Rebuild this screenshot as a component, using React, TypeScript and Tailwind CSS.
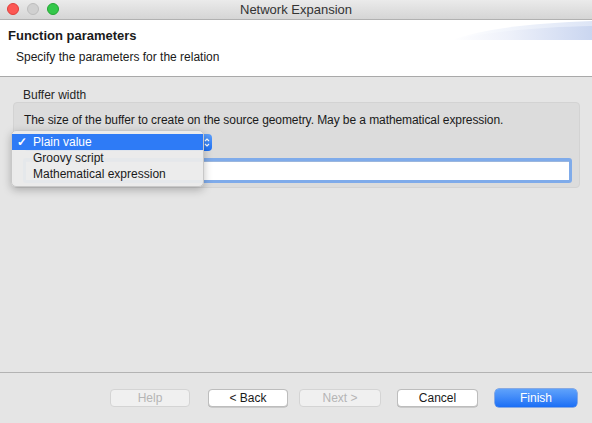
import React from "react";

const font = { fontFamily: '"Liberation Sans", Arial, sans-serif' };

function Btn({ label, kind, w, ml }: { label: string; kind: "disabled" | "normal" | "primary"; w: string; ml: string }) {
  if (kind === "primary")
    return (
      <div className={`${w} ${ml} h-[18px] rounded-[4px] bg-gradient-to-b from-[#5fa2fb] to-[#1a6ef5] text-white text-[12px] flex items-center justify-center shadow-[0_0_0_0.5px_#2a6fe0]`}>
        {label}
      </div>
    );
  if (kind === "disabled")
    return (
      <div className={`${w} ${ml} h-[18px] rounded-[4px] bg-[#f0f0f0] border border-[#d4d4d4] text-[#b5b5b5] text-[12px] flex items-center justify-center`}>
        {label}
      </div>
    );
  return (
    <div className={`${w} ${ml} h-[18px] rounded-[4px] bg-white border border-[#bdbdbd] text-[#1a1a1a] text-[12px] flex items-center justify-center shadow-[0_0.5px_0_#b0b0b0]`}>
      {label}
    </div>
  );
}

export default function App() {
  return (
    <div className="w-[592px] h-[423px] flex flex-col bg-[#e5e5e5] overflow-hidden text-[#1a1a1a]" style={font}>
      {/* title bar */}
      <div className="relative h-[20px] bg-gradient-to-b from-[#ebebeb] to-[#d5d5d5] border-b border-[#b1b1b1] flex items-center justify-center">
        <div className="absolute left-[7px] top-[3px] flex gap-[8px]">
          <div className="w-[12px] h-[12px] rounded-full bg-[#fc5753] border border-[#df3e3a]" />
          <div className="w-[12px] h-[12px] rounded-full bg-[#d0d0d0] border border-[#bdbdbd]" />
          <div className="w-[12px] h-[12px] rounded-full bg-[#34c84a] border border-[#24a634]" />
        </div>
        <span className="text-[13px] text-[#333] leading-none">Network Expansion</span>
      </div>

      {/* header */}
      <div className="relative h-[57px] bg-white border-b border-[#a9a9a9] flex flex-col pl-[8px]">
        <svg className="absolute right-0 top-[1px]" width="140" height="20" viewBox="0 0 140 20">
          <defs>
            <linearGradient id="g" x1="0" x2="1" y1="0" y2="0">
              <stop offset="0" stopColor="#ffffff" />
              <stop offset="0.4" stopColor="#eef1fa" />
              <stop offset="1" stopColor="#cad6f0" />
            </linearGradient>
            <linearGradient id="g2" x1="0" x2="1" y1="0" y2="0">
              <stop offset="0" stopColor="#ffffff" />
              <stop offset="1" stopColor="#dde5f6" />
            </linearGradient>
          </defs>
          <path d="M0 19 C 30 8, 80 2, 140 0 L140 19 Z" fill="url(#g2)" />
          <path d="M0 19 C 35 11, 85 6, 140 5 L140 19 Z" fill="url(#g)" />
        </svg>
        <div className="relative mt-[8px] text-[13px] font-bold leading-[16px]">Function parameters</div>
        <div className="relative mt-[6px] ml-[8px] text-[12px] leading-[14px]">Specify the parameters for the relation</div>
      </div>

      {/* body */}
      <div className="flex-1 relative px-[13px] pt-[11px]">
        <div className="ml-[10px] text-[12px] leading-[14px] text-[#262626]">Buffer width</div>
        <div className="w-[567px] h-[86px] rounded-[4px] bg-[#dcdcdc] border border-[#d3d3d3] px-[10px] pt-[10px]">
          <div className="text-[12px] leading-[14px] tracking-[-0.08px]">
            The size of the buffer to create on the source geometry. May be a mathematical expression.
          </div>
          <div className="mt-[7px] w-[188px] h-[17px] rounded-[4px] bg-gradient-to-b from-[#5c9ffa] to-[#1b6ff5] flex justify-end items-center pr-[2px]">
            <svg width="6" height="11" viewBox="0 0 6 11">
              <path d="M1 4 L3 2 L5 4 M1 7 L3 9 L5 7" stroke="white" strokeWidth="1.2" fill="none" />
            </svg>
          </div>
          <div className="mt-[7px] w-[549px] h-[25px] rounded-[3px] bg-[#7fabea] p-[3px] -ml-[1px]">
            <div className="w-full h-full bg-white border-t border-[#9bb6dd]" />
          </div>
        </div>

        {/* dropdown menu */}
        <div className="absolute left-[11px] top-[53px] w-[193px] h-[57px] rounded-[5px] bg-[#ebebeb]/95 border border-[#c8c8c8] shadow-[0_3px_8px_rgba(0,0,0,0.25)] pt-[3px] text-[12px]">
          <div className="h-[16px] bg-[#2e7bf6] text-white flex items-center">
            <span className="w-[21px] pl-[5px] text-[12px] font-bold leading-none">✓</span>
            <span>Plain value</span>
          </div>
          <div className="h-[16px] flex items-center pl-[21px]">Groovy script</div>
          <div className="h-[16px] flex items-center pl-[21px]">Mathematical expression</div>
        </div>
      </div>

      {/* footer */}
      <div className="h-[51px] border-t border-[#b3b3b3] flex items-start pt-[16px] pl-[110px]">
        <Btn label="Help" kind="disabled" w="w-[80px]" ml="ml-0" />
        <Btn label="< Back" kind="normal" w="w-[80px]" ml="ml-[18px]" />
        <Btn label="Next >" kind="disabled" w="w-[82px]" ml="ml-[11px]" />
        <Btn label="Cancel" kind="normal" w="w-[81px]" ml="ml-[16px]" />
        <Btn label="Finish" kind="primary" w="w-[82px]" ml="ml-[17px]" />
      </div>
    </div>
  );
}
